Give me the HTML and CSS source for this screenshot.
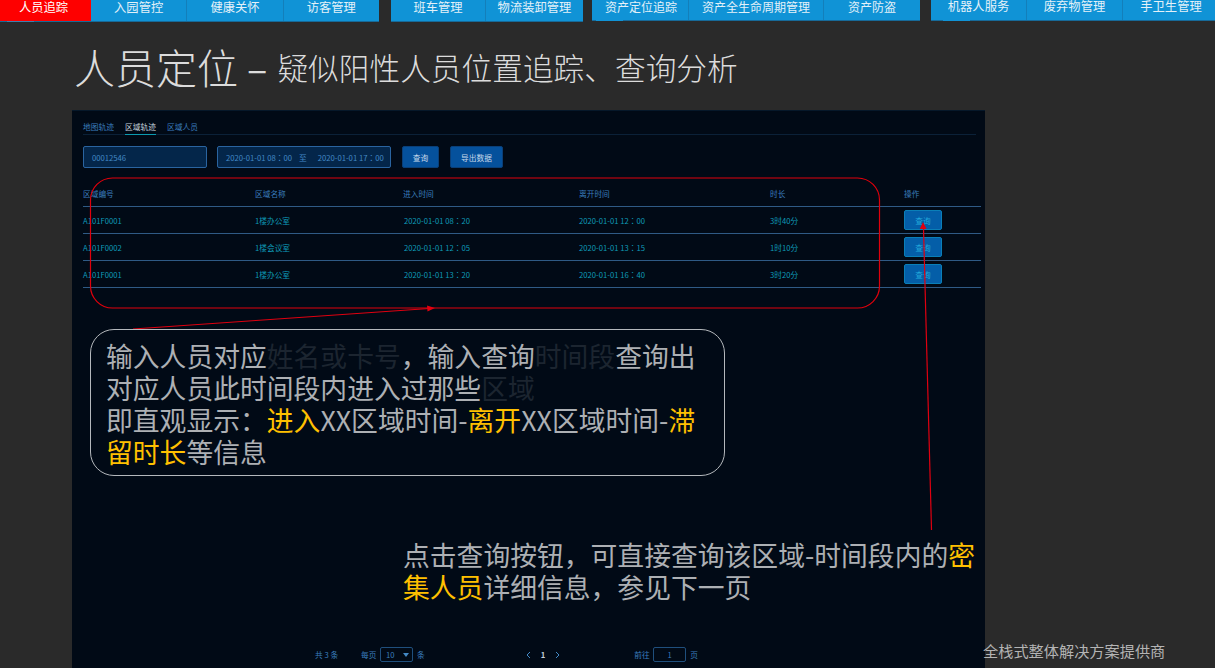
FILE: index.html
```html
<!DOCTYPE html>
<html lang="zh-CN">
<head>
<meta charset="utf-8">
<title>人员定位</title>
<link rel="stylesheet" href="styles.css">
</head>
<body>
<nav class="nav">
  <div class="group g1">
    <a class="item active">人员追踪</a><a class="item">入园管控</a><a class="item">健康关怀</a><a class="item">访客管理</a>
    <i class="mark"></i>
  </div>
  <div class="group g2">
    <a class="item">班车管理</a><a class="item">物流装卸管理</a>
  </div>
  <div class="group g3 high">
    <a class="item">资产定位追踪</a><a class="item">资产全生命周期管理</a><a class="item">资产防盗</a>
    <i class="mark"></i>
  </div>
  <div class="group g4 high">
    <a class="item">机器人服务</a><a class="item">废弃物管理</a><a class="item">手卫生管理</a>
    <i class="mark m4"></i>
  </div>
</nav>

<h1 class="title"><span class="big">人员定位</span><span class="dash">–</span><span class="sub">疑似阳性人员位置追踪、查询分析</span></h1>

<main class="panel">
  <div class="tabs">
    <span class="tab">地图轨迹</span><span class="tab on">区域轨迹</span><span class="tab">区域人员</span>
  </div>
  <div class="filters">
    <div class="field f-id">00012546</div>
    <div class="field f-date"><span>2020-01-01 08<b class="cc">：</b>00</span><span class="to">至</span><span>2020-01-01 17<b class="cc">：</b>00</span></div>
    <button class="btn b-q">查询</button>
    <button class="btn b-x">导出数据</button>
  </div>
  <div class="table">
    <div class="row head"><span>区域编号</span><span>区域名称</span><span>进入时间</span><span>离开时间</span><span>时长</span><span>操作</span></div>
    <div class="row"><span>A101F0001</span><span>1楼办公室</span><span>2020-01-01 08<b class="cc">：</b>20</span><span>2020-01-01 12<b class="cc">：</b>00</span><span>3时40分</span><span><button class="act">查询</button></span></div>
    <div class="row"><span>A101F0002</span><span>1楼会议室</span><span>2020-01-01 12<b class="cc">：</b>05</span><span>2020-01-01 13<b class="cc">：</b>15</span><span>1时10分</span><span><button class="act">查询</button></span></div>
    <div class="row"><span>A101F0001</span><span>1楼办公室</span><span>2020-01-01 13<b class="cc">：</b>20</span><span>2020-01-01 16<b class="cc">：</b>40</span><span>3时20分</span><span><button class="act">查询</button></span></div>
  </div>
  <div class="pager">
    <span class="total">共 3 条</span>
    <span class="per">每页</span>
    <span class="sel">10<svg class="caret" width="6" height="4" viewBox="0 0 6 4"><path d="M0 0H6L3 4Z"/></svg></span>
    <span class="unit">条</span>
    <svg class="chev c-l" width="5" height="8" viewBox="0 0 5 8"><path d="M4 1L1 4L4 7"/></svg>
    <span class="cur">1</span>
    <svg class="chev c-r" width="5" height="8" viewBox="0 0 5 8"><path d="M1 1L4 4L1 7"/></svg>
    <span class="go">前往</span>
    <span class="jump">1</span>
    <span class="unit">页</span>
  </div>
</main>

<svg class="marks" width="1215" height="668" viewBox="0 0 1215 668">
  <rect x="90.500" y="178" width="789" height="130" rx="22" fill="none" stroke="#e0000c" stroke-width="1.200"/>
  <path d="M133 329L428 308.600" fill="none" stroke="#e00010" stroke-width="1"/>
  <path d="M435 308L427 305.500L427.500 311.500Z" fill="#e00010"/>
  <path d="M931.500 530L923.500 228" fill="none" stroke="#e00010" stroke-width="1.200"/>
  <path d="M923 222L919.800 229H926.500Z" fill="#e00010"/>
</svg>

<div class="callout">
  输入人员对应<span class="dim">姓名或卡号</span>，输入查询<span class="dim">时间段</span>查询出<br>
  对应人员此时间段内进入过那些<span class="dim">区域</span><br>
  即直观显示<b class="cc">：</b><span class="hl">进入</span>XX区域时间-<span class="hl">离开</span>XX区域时间-<span class="hl">滞</span><br>
  <span class="hl">留时长</span>等信息
</div>

<div class="note">
  点击查询按钮，可直接查询该区域-时间段内的<span class="hl">密</span><br>
  <span class="hl">集人员</span>详细信息，参见下一页
</div>

<div class="slogan">全栈式整体解决方案提供商</div>
</body>
</html>
```

FILE: styles.css
```css
* { box-sizing: border-box; }
html, body { margin: 0; padding: 0; }
body {
  width: 1215px;
  height: 668px;
  overflow: hidden;
  position: relative;
  display: flex;
  flex-direction: column;
  background: #2a2a2a;
  font-family: "Noto Sans CJK SC", "Noto Sans", sans-serif;
}
.cc { font-family: "Noto Sans CJK TC", sans-serif; font-weight: 400; }

/* top navigation */
.nav { display: flex; height: 23px; flex: none; }
.group {
  position: relative;
  display: flex;
  height: 22px;
  background: #1093d6;
  border-bottom: 1px solid #176a99;
}
.g1 { width: 379px; }
.g2 { width: 192px; margin-left: 12px; }
.g3 { width: 328px; margin-left: 9px; height: 21px; }
.g4 { width: 284px; margin-left: 11px; height: 21px; }
.item {
  flex: 1 1 0;
  text-align: center;
  color: #e3f1f9;
  font-size: 12.3px;
  line-height: 15px;
  border-right: 1px solid #137fba;
  white-space: nowrap;
}
.group .item:last-of-type { border-right: 0; }
.high .item { line-height: 13px; }
.g3 .item { font-size: 12px; }
.g1 .item:nth-child(1) { flex: 0 0 91px; }
.g2 .item:nth-child(1) { flex: 0 0 95px; }
.g3 .item:nth-child(1) { flex: 0 0 97px; padding-left: 2px; }
.g3 .item:nth-child(2) { flex: 0 0 135px; }
.g4 .item { flex: 0 0 96px; }
.item.active { background: #fe0000; color: #fff; border-right: 0; padding-right: 4px; }
.mark {
  position: absolute;
  left: 7px;
  bottom: -1px;
  width: 27px;
  height: 1px;
  background: #3f7fb0;
}
.high .mark { left: 12px; background: #1093d6; }
.g3 .mark { left: 4px; }

/* page heading */
.title {
  margin: 19px 0 20px 74px;
  height: 48px;
  display: flex;
  align-items: center;
  font-weight: 300;
  color: #dcdcdc;
  white-space: nowrap;
}
.big { font-size: 41px; font-weight: 300; }
.dash { font-size: 38px; font-weight: 400; margin: 0 10px 0 9px; }
.sub { font-size: 30.7px; font-weight: 300; }

/* dark application panel */
.panel {
  flex: 1;
  width: 913px;
  margin-left: 72px;
  padding: 11px 4px 6px 11px;
  display: flex;
  flex-direction: column;
  background: #010a16;
  border-top: 1px solid #06182a;
}
.tabs {
  display: flex;
  gap: 11px;
  height: 13px;
  margin-right: 5px;
  border-bottom: 1px solid #0b2138;
}
.tab {
  width: 31px;
  height: 13px;
  font-size: 7.75px;
  line-height: 10px;
  color: #3a7dbd;
  white-space: nowrap;
}
.tab.on { color: #c4d2dd; border-bottom: 1px solid #0b9bb0; }

.filters { display: flex; margin-top: 11px; height: 22px; }
.field {
  height: 22px;
  display: flex;
  align-items: center;
  background: #04264a;
  border: 1px solid #2a64a0;
  border-radius: 2px;
  font-size: 7.7px;
  color: #4389c6;
  white-space: nowrap;
}
.f-id { width: 124px; padding-left: 8px; }
.f-date { width: 174px; margin-left: 10px; padding-left: 8px; }
.to { margin: 0 8px 0 7px; }
.to + span { margin-left: 3px; }
.btn {
  height: 22px;
  margin: 0;
  padding: 0;
  border: 1px solid #0a3f78;
  border-radius: 2px;
  background: #05519c;
  color: #c6d8ea;
  font: inherit;
  font-size: 7.7px;
}
.b-q { width: 37px; margin-left: 11px; }
.b-x { width: 53px; margin-left: 11px; }

.table { margin-top: 9px; }
.row {
  display: grid;
  grid-template-columns: 172px 149px 175px 191px 134px 1fr;
  align-items: center;
  height: 27px;
  border-bottom: 1px solid #2f5a85;
  font-size: 7.7px;
  color: #0e9ab8;
  white-space: nowrap;
}
.row.head { height: 30px; padding-top: 4px; color: #3a7dbd; }
.row.head span:nth-child(3) { margin-left: -1px; }
.act {
  display: block;
  width: 38px;
  height: 20px;
  margin: 0;
  padding: 0;
  background: #045ea8;
  border: 1px solid #0a7fb8;
  border-radius: 2px;
  color: #22a8da;
  font: inherit;
  font-size: 7.7px;
}

.pager {
  margin-top: auto;
  display: flex;
  align-items: center;
  height: 15px;
  font-size: 7.7px;
  color: #3a7dbd;
  white-space: nowrap;
}
.total { margin-left: 232px; width: 46px; }
.sel, .jump {
  height: 15px;
  border: 1px solid #1f4f7d;
  border-radius: 2px;
  display: flex;
  align-items: center;
}
.per { width: 19px; }
.sel { width: 33px; padding-left: 5px; position: relative; }
.caret { position: absolute; right: 3px; top: 5px; fill: #4389c6; }
.unit { margin-left: 4px; }
.chev { fill: none; stroke: #4389c6; stroke-width: 1; }
.c-l { margin-left: 101px; }
.cur { margin-left: 10px; color: #c5d2dd; font-weight: 700; }
.c-r { margin-left: 10px; }
.go { margin-left: 74px; width: 19px; }
.jump { width: 33px; justify-content: center; }

/* annotations lying over the panel */
.marks { position: absolute; left: 0; top: 0; pointer-events: none; }
.callout {
  position: absolute;
  left: 90px;
  top: 329px;
  width: 635px;
  height: 147px;
  padding: 10px 0 0 15px;
  border: 1px solid #b4b8bc;
  border-radius: 24px;
  font-size: 26.8px;
  line-height: 32px;
  color: #adb0b4;
  white-space: nowrap;
}
.note {
  position: absolute;
  left: 403px;
  top: 539px;
  font-size: 26.8px;
  line-height: 32px;
  color: #adb0b4;
  white-space: nowrap;
}
.dim { color: #1c2530; }
.hl { color: #ffc000; }
.slogan {
  position: absolute;
  left: 983px;
  top: 640px;
  font-size: 15.2px;
  line-height: 20px;
  color: #b4b4b4;
  white-space: nowrap;
}
```
